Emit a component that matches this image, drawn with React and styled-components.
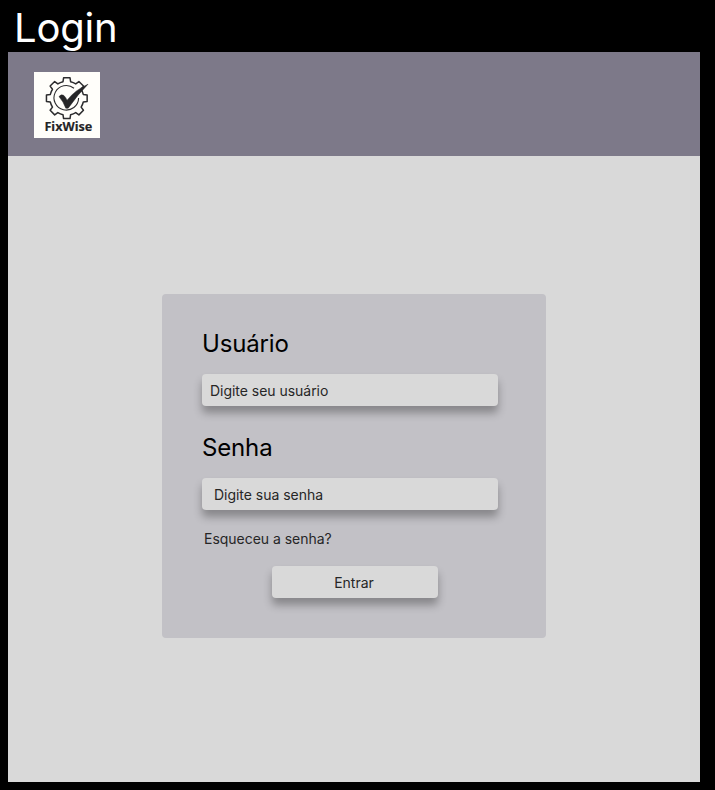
import React from 'react';
import styled, { createGlobalStyle } from 'styled-components';

const GlobalStyle = createGlobalStyle`
  * { box-sizing: border-box; }
  body {
    margin: 0;
    background: #000;
    font-family: Inter, sans-serif;
    color: #000;
  }
`;

const Page = styled.div`
  height: 790px;
  padding: 0 15px 8px 8px;
  display: flex;
  flex-direction: column;
  overflow: hidden;
`;

const Title = styled.h1`
  margin: 0;
  height: 52px;
  padding: 4px 0 0 6px;
  font-size: 40px;
  line-height: 48px;
  font-weight: 400;
  letter-spacing: -0.2px;
  color: #fff;
`;

const Screen = styled.div`
  flex: 1;
  display: flex;
  flex-direction: column;
  background: #d9d9d9;
`;

const Header = styled.header`
  height: 104px;
  padding: 20px 26px;
  background: #7d7989;
`;

const LogoMark = styled.svg`
  display: block;
  width: 66px;
  height: 66px;
  background: #fffefa;
`;

const Main = styled.main`
  flex: 1;
  display: flex;
  justify-content: center;
  align-items: flex-start;
  padding-top: 138px;
`;

const Card = styled.form`
  width: 384px;
  height: 344px;
  padding: 35px 48px 0 40px;
  border-radius: 4px;
  background: #c2c1c6;
  display: flex;
  flex-direction: column;
`;

const Label = styled.label`
  height: 30px;
  margin-bottom: 15px;
  font-size: 24px;
  line-height: 30px;
  font-weight: 400;
  letter-spacing: -0.15px;
`;

const Input = styled.input`
  width: 100%;
  height: 32px;
  padding: 0 8px 0 ${(p) => p.$indent}px;
  margin: 0 0 ${(p) => p.$gap}px;
  border: 0;
  outline: 0;
  border-radius: 4px;
  background: #d9d9d9;
  box-shadow: 0 7px 8px rgba(0, 0, 0, 0.3);
  font: 400 14px Inter, sans-serif;
  letter-spacing: -0.03px;
  &::placeholder {
    color: #262626;
    opacity: 1;
  }
`;

const ForgotLink = styled.a`
  height: 20px;
  padding-left: 2px;
  margin-bottom: 17px;
  font-size: 14px;
  line-height: 20px;
  letter-spacing: -0.03px;
  color: #262626;
`;

const Submit = styled.button`
  width: 166px;
  height: 32px;
  margin-left: 70px;
  padding: 0 2px 0 0;
  border: 0;
  border-radius: 4px;
  background: #d9d9d9;
  box-shadow: 0 7px 8px rgba(0, 0, 0, 0.3);
  font: 400 14px Inter, sans-serif;
  color: #262626;
`;

const gearPath = (cx, cy, outer, root, teeth) => {
  const step = 360 / teeth;
  const at = (r, deg) => {
    const a = ((deg - 90) * Math.PI) / 180;
    return `${(cx + r * Math.cos(a)).toFixed(2)} ${(cy + r * Math.sin(a)).toFixed(2)}`;
  };
  let d = '';
  for (let i = 0; i < teeth; i += 1) {
    const c = i * step;
    d += `${i ? 'L' : 'M'}${at(root, c - 13)}L${at(outer, c - 9)}L${at(outer, c + 9)}L${at(root, c + 13)}`;
    d += `A${root} ${root} 0 0 1 ${at(root, c + step - 13)}`;
  }
  return `${d}Z`;
};

const Logo = () => (
  <LogoMark viewBox="0 0 66 66" role="img" aria-label="FixWise">
    <path d={gearPath(32.8, 26.2, 20.6, 16.9, 8)} fill="none" stroke="#2c2c2e" strokeWidth="1.5" strokeLinejoin="round" />
    <path d="M40 16.2A12.3 12.3 0 1 0 44.6 26" fill="none" stroke="#2c2c2e" strokeWidth="1.1" />
    <path d="M25 24.6Q27 21.8 29.6 23.3Q31.8 25.2 33.1 28.2Q41 18 54 12.2Q43.6 22.6 34.2 36.2L31.8 36.2Q29.4 29.6 25 24.6Z" fill="#252527" stroke="#252527" strokeWidth="0.5" strokeLinejoin="round" />
    <text x="34.4" y="59" textAnchor="middle" textLength="48" lengthAdjust="spacingAndGlyphs" fontFamily="Noto Sans, sans-serif" fontWeight="700" fontSize="12.6" fill="#242426" stroke="#242426" strokeWidth="0.15">FixWise</text>
  </LogoMark>
);

export default function App() {
  return (
    <>
      <GlobalStyle />
      <Page>
        <Title>Login</Title>
        <Screen>
          <Header>
            <Logo />
          </Header>
          <Main>
            <Card>
              <Label htmlFor="user">Usuário</Label>
              <Input id="user" placeholder="Digite seu usuário" $indent={8} $gap={27} />
              <Label htmlFor="password">Senha</Label>
              <Input id="password" type="password" placeholder="Digite sua senha" $indent={12} $gap={19} />
              <ForgotLink>Esqueceu a senha?</ForgotLink>
              <Submit type="button">Entrar</Submit>
            </Card>
          </Main>
        </Screen>
      </Page>
    </>
  );
}
